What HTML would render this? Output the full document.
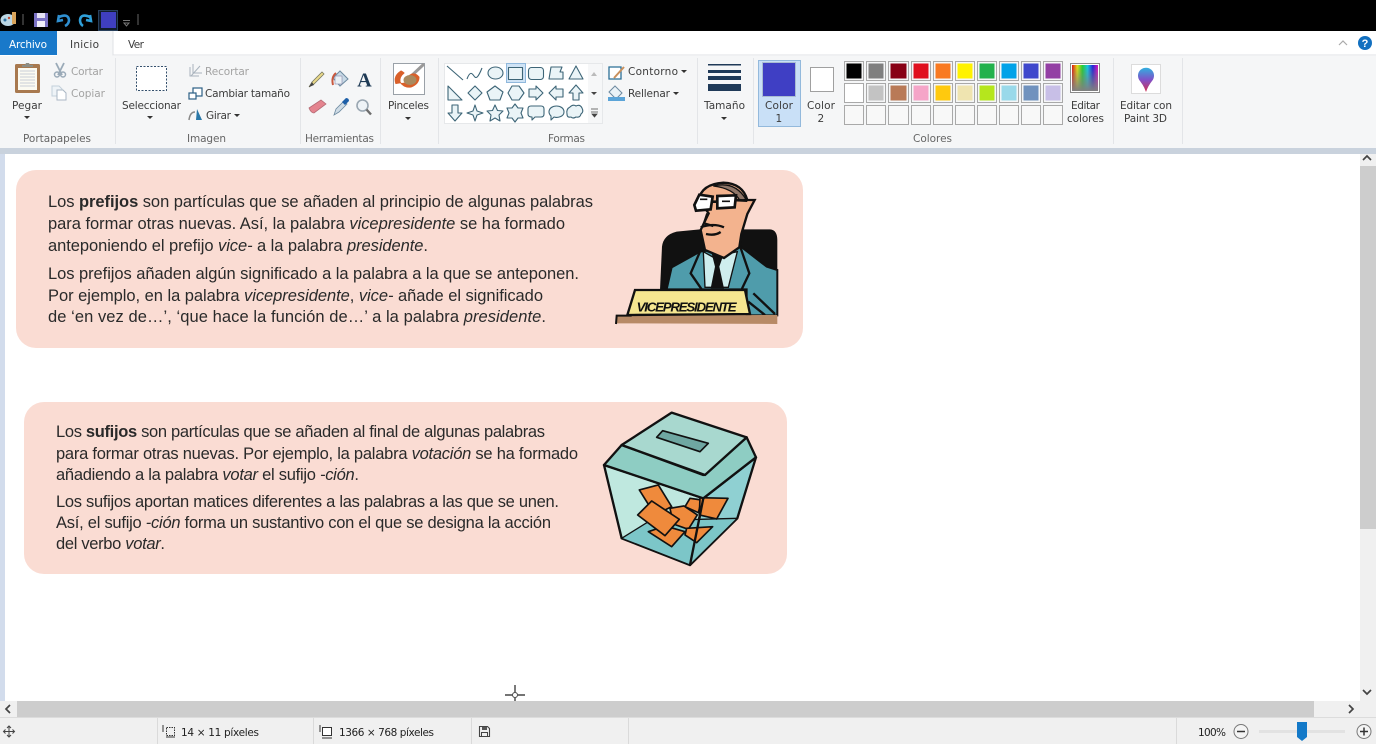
<!DOCTYPE html>
<html lang="es"><head><meta charset="utf-8"><title>Paint</title>
<style>
html,body{margin:0;padding:0;width:1376px;height:744px;overflow:hidden;background:#fff}
svg{display:block;filter:blur(.3px)}
.r{font-family:"DejaVu Sans","Liberation Sans",sans-serif;font-size:10.5px;fill:#3c3c3c}
.d{fill:#a3a3a3}
.g{fill:#666}
.c{font-family:"Liberation Sans",sans-serif;font-size:16.5px;fill:#2a2a2a}
.s{fill:#eaf4f7;stroke:#3d6577;stroke-width:1.1;stroke-linejoin:round}
</style></head><body>
<svg width="1376" height="744" viewBox="0 0 1376 744" xmlns="http://www.w3.org/2000/svg">
<!-- title bar -->
<rect width="1376" height="31" fill="#000"/>
<g>
<ellipse cx="8" cy="20" rx="7.500" ry="6" fill="#bcd7e4"/><circle cx="5" cy="20" r="1.500" fill="#2f6f9f"/><circle cx="9" cy="18" r="1.200" fill="#c0503a"/>
<rect x="12" y="12" width="4" height="12" fill="#d9a45b"/>
<rect x="22" y="14" width="2" height="11" fill="#333"/>
<rect x="34" y="13" width="14" height="14" fill="#7b72c4"/><rect x="37" y="13" width="8" height="5" fill="#e6e3f5"/><rect x="37" y="21" width="8" height="6" fill="#f0eefa"/>
<path d="M59 15 L58 21 L63 20 M59 17 Q68 13 69 20 Q69 24 65 26" fill="none" stroke="#2f8fd0" stroke-width="2.600"/>
<path d="M90 15 L91 21 L86 20 M90 17 Q81 13 80 20 Q80 24 83 26" fill="none" stroke="#2f9fd8" stroke-width="2.600"/>
<rect x="98.500" y="10.500" width="19" height="20" fill="#101c2c" stroke="#28405c"/>
<rect x="101" y="12" width="15" height="16" fill="#3f3fc0"/>
<path d="M123 20.500h7M124 23l2.500 3 2.500-3z" fill="none" stroke="#777"/>
<rect x="137" y="14" width="2" height="11" fill="#333"/>
</g>
<!-- tab row -->
<rect y="31" width="1376" height="24" fill="#fff"/>
<rect y="31" width="57" height="24" fill="#1979ca"/>
<rect x="57" y="31" width="56" height="25" fill="#f5f6f7"/>
<path d="M113 31V55H1376" fill="none" stroke="#dfe1e4"/>
<text class="r" x="9" y="48" textLength="38" style="fill:#fff">Archivo</text>
<text class="r" x="70" y="48" textLength="29">Inicio</text>
<text class="r" x="128" y="48" textLength="16">Ver</text>
<path d="M1339 45l4-4 4 4" fill="none" stroke="#aaa" stroke-width="1.200"/>
<circle cx="1365" cy="43" r="7" fill="#1270c0"/>
<text x="1365" y="47" text-anchor="middle" style="font:bold 11px 'Liberation Sans',sans-serif;fill:#fff">?</text>
<!-- ribbon -->
<rect y="56" width="1376" height="92" fill="#f5f6f7"/>
<rect y="148" width="1376" height="6" fill="#c9d2dd"/>
<path d="M115.500 58V144M300.500 58V144M380.500 58V144M438.500 58V144M697.500 58V144M753.500 58V144M1113.500 58V144M1182.500 58V144" stroke="#e3e5e8"/>
<!-- clipboard -->
<rect x="15" y="64" width="25" height="29" rx="1.500" fill="#a8794f"/>
<rect x="18" y="68" width="19" height="22" fill="#fbfaf1"/>
<path d="M20 71h15M20 74h15M20 77h15M20 80h15M20 83h15M20 86h15" stroke="#c9cfd6"/>
<path d="M22 67v-2h3l1-2h3l1 2h3v2z" fill="#8d8d84"/>
<path d="M24 116h6l-3 3z" fill="#333"/>
<text class="r" x="12" y="109" textLength="30">Pegar</text>
<!-- scissors -->
<path d="M56 63l6 12M64 63l-6 12" stroke="#9aaab8" stroke-width="1.800" fill="none"/>
<circle cx="57" cy="74.500" r="2.500" fill="none" stroke="#9aaab8" stroke-width="1.500"/><circle cx="63" cy="74.500" r="2.500" fill="none" stroke="#9aaab8" stroke-width="1.500"/>
<text class="r d" x="71" y="75" textLength="32">Cortar</text>
<path d="M52 86h7l3 3v7h-10z" fill="#eef3f7" stroke="#c3d0db"/><path d="M57 90h6l3 3v7h-9z" fill="#fff" stroke="#aab7c4"/>
<text class="r d" x="71" y="97" textLength="34">Copiar</text>
<text class="r g" x="23" y="142" textLength="68">Portapapeles</text>
<!-- select -->
<rect x="136.500" y="66.500" width="30" height="24" fill="#fff" stroke="#34506c" stroke-dasharray="2 1.500"/>
<text class="r" x="122" y="109" textLength="59">Seleccionar</text>
<path d="M147 116h6l-3 3z" fill="#333"/>
<path d="M190 67v9h9M193 64v9h9" fill="none" stroke="#a9b3bd"/><path d="M191 76l9-10" stroke="#a9b3bd"/>
<text class="r d" x="205" y="75" textLength="44">Recortar</text>
<rect x="193" y="88" width="9" height="8" fill="#fff" stroke="#2b5f85" stroke-width="1.200"/><rect x="189" y="93" width="7" height="6" fill="#fff" stroke="#2b5f85" stroke-width="1.200"/>
<text class="r" x="205" y="97" textLength="85">Cambiar tamaño</text>
<path d="M189 120q1-8 6-8" fill="none" stroke="#888" stroke-width="1.500"/><path d="M197 109l5 11h-6z" fill="#2a78a8"/>
<text class="r" x="206" y="119" textLength="25">Girar</text>
<path d="M234 114h6l-3 3z" fill="#333"/>
<text class="r g" x="187" y="142" textLength="39">Imagen</text>
<!-- tools -->
<path d="M309 87l3-5 10-10 2 2-10 10z" fill="#ead98a" stroke="#7a7a60" stroke-width=".8"/>
<path d="M309 87l3-5 2 3z" fill="#444"/>
<path d="M340 71l8 8-8 7-7-8z" fill="#c7d9e6" stroke="#6d8aa0"/><rect x="335" y="76" width="7" height="8" fill="#e9f0f5" stroke="#88a" stroke-width=".6"/>
<path d="M333 85q-2-8 3-12" fill="none" stroke="#c9583e" stroke-width="2"/>
<text x="364.500" y="86.500" text-anchor="middle" style="font:bold 20px 'Liberation Serif',serif;fill:#1e3a55">A</text>
<path d="M309 108l12-8 5 4-12 9q-3 0-5-5z" fill="#e4848f" stroke="#b46a74" stroke-width=".8"/>
<path d="M334 115l2-6 8-8 3 3-8 8z" fill="#cfdce6" stroke="#6d8aa0" stroke-width=".8"/><path d="M342 102l4-4q3 0 3 3l-4 4z" fill="#1d5fa8"/>
<circle cx="362.500" cy="105.500" r="5.500" fill="#eef3f7" stroke="#9aa7b2" stroke-width="1.600"/><path d="M366.500 109.500l4.500 5" stroke="#6d6d6d" stroke-width="2.400"/>
<!-- pinceles -->
<rect x="393.500" y="63.500" width="31" height="31" fill="#fff" stroke="#9aa1a8"/>
<path d="M424 64l-16 15" stroke="#999" stroke-width="3"/>
<path d="M396 84q-3-8 5-13 2 1 3 2q-5 4-4 9 4 6 11 5 8-3 8-10-4-5-9-2-5 3-2 7" fill="#d9602a" stroke="#d9602a"/>
<ellipse cx="410" cy="80" rx="6.500" ry="5" fill="#a98a5f"/>
<text class="r" x="388" y="109" textLength="41">Pinceles</text>
<path d="M405 117h6l-3 3z" fill="#333"/>
<text class="r g" x="305" y="142" textLength="69">Herramientas</text>
<!-- shapes gallery -->
<rect x="444.500" y="63.500" width="158" height="60" fill="#fff" stroke="#e6e8ea"/>
<rect x="506.500" y="63.500" width="19" height="19" fill="#cfe3f5" stroke="#90b8dc"/>
<rect x="588" y="64" width="14" height="59" fill="#f6f7f8"/>
<path d="M447 66l16 14" class="s" fill="none"/>
<path d="M467 79c3-8 5-6 7-3s4 2 8-8" fill="none" stroke="#3d6577" stroke-width="1.100"/>
<ellipse cx="495.500" cy="73" rx="7.500" ry="6" class="s"/>
<rect x="508.500" y="67.500" width="14" height="12" class="s"/>
<rect x="528.500" y="67.500" width="15" height="12" rx="3" class="s"/>
<path d="M551 67h11l-2 5h3v7h-14z" class="s"/>
<path d="M576 66l7 13h-14z" class="s"/>
<path d="M448 86l14 14h-14z" class="s"/>
<path d="M475 86l7 7-7 7-7-7z" class="s"/>
<path d="M495 86l8 6-3 8h-10l-3-8z" class="s"/>
<path d="M512 86h7l5 7-5 7h-7l-4-7z" class="s"/>
<path d="M529 89h7v-3l7 7-7 7v-3h-7z" class="s"/>
<path d="M563 89h-7v-3l-7 7 7 7v-3h7z" class="s"/>
<path d="M576 85l7 8h-4v7h-6v-7h-4z" class="s"/>
<path d="M452 105h6v8h4l-7 8-7-8h4z" class="s"/>
<path d="M475 105l2 6 6 2-6 2-2 6-2-6-6-2 6-2z" class="s"/>
<path d="M495 105l2.500 5.500 5.500.5-4 4 1 6-5-3-5 3 1-6-4-4 5.500-.5z" class="s"/>
<path d="M515 104l3 4h5l-2 5 2 5h-5l-3 4-3-4h-5l2-5-2-5h5z" class="s"/>
<path d="M531 106h10q3 0 3 3v5q0 3-3 3h-6l-3 3v-3q-4 0-4-3v-5q0-3 3-3z" class="s"/>
<path d="M549 112c0-8 15-8 15 0c0 5-7 6-10 5l-3 3v-4q-2-2-2-4z" class="s"/>
<path d="M570 107q3-3 6-1 4-2 6 2 2 4-1 6-1 4-5 3-3 2-5 0-4 1-4-3-1-5 3-7z" class="s"/>
<path d="M591 76l3-4 3 4z" fill="#bbb"/><path d="M591 92h6l-3 3z" fill="#444"/>
<path d="M591 109h7M591 112h7M592 114h5l-2.500 3z" fill="#444" stroke="#444" stroke-width=".8"/>
<path d="M609 67h12v12h-12z" fill="#fff" stroke="#2b6f96" stroke-width="1.300"/><path d="M614 78l10-11" stroke="#c9905c" stroke-width="2"/>
<text class="r" x="628" y="75" textLength="50">Contorno</text>
<path d="M681 70h6l-3 3z" fill="#333"/>
<path d="M615 86l7 7-6 6-7-7z" fill="#eaf2f7" stroke="#6d8aa0"/><rect x="608" y="97" width="17" height="4" fill="#5ba4d8"/>
<text class="r" x="628" y="97" textLength="42">Rellenar</text>
<path d="M673 92h6l-3 3z" fill="#333"/>
<text class="r g" x="548" y="142" textLength="37">Formas</text>
<!-- size -->
<rect x="708" y="64" width="33" height="1.500" fill="#1f3a58"/><rect x="708" y="70" width="33" height="3" fill="#1f3a58"/><rect x="708" y="76" width="33" height="4" fill="#1f3a58"/><rect x="708" y="84" width="33" height="7" fill="#1f3a58"/>
<text class="r" x="704" y="109" textLength="41">Tamaño</text>
<path d="M721 117h6l-3 3z" fill="#333"/>
<!-- color 1/2 -->
<rect x="758.500" y="60.500" width="42" height="66" fill="#c9e0f7" stroke="#93b9dc"/>
<rect x="762.500" y="62.500" width="33" height="34" fill="#3f3fc4" stroke="#a9bdd2"/>
<text class="r" x="765" y="109" textLength="28">Color</text>
<text class="r" x="775.500" y="122">1</text>
<rect x="810.500" y="67.500" width="23" height="24" fill="#fff" stroke="#a0a0a0"/>
<text class="r" x="807" y="109" textLength="28">Color</text>
<text class="r" x="817.500" y="122">2</text>
<!-- palette -->
<g stroke="#a9a9a9" fill="none">
<g>
<rect x="844.500" y="61.500" width="19" height="19" fill="#f5f5f5"/><rect x="846.500" y="63.500" width="15" height="15" fill="#000" stroke="none"/>
<rect x="866.500" y="61.500" width="19" height="19"/><rect x="868.500" y="63.500" width="15" height="15" fill="#7f7f7f" stroke="none"/>
<rect x="888.500" y="61.500" width="20" height="19"/><rect x="890.500" y="63.500" width="16" height="15" fill="#880015" stroke="none"/>
<rect x="911.500" y="61.500" width="19" height="19"/><rect x="913.500" y="63.500" width="15" height="15" fill="#e0101f" stroke="none"/>
<rect x="933.500" y="61.500" width="19" height="19"/><rect x="935.500" y="63.500" width="15" height="15" fill="#f97a22" stroke="none"/>
<rect x="955.500" y="61.500" width="19" height="19"/><rect x="957.500" y="63.500" width="15" height="15" fill="#fff200" stroke="none"/>
<rect x="977.500" y="61.500" width="19" height="19"/><rect x="979.500" y="63.500" width="15" height="15" fill="#22b14c" stroke="none"/>
<rect x="999.500" y="61.500" width="19" height="19"/><rect x="1001.500" y="63.500" width="15" height="15" fill="#00a2e8" stroke="none"/>
<rect x="1021.500" y="61.500" width="19" height="19"/><rect x="1023.500" y="63.500" width="15" height="15" fill="#3f48cc" stroke="none"/>
<rect x="1043.500" y="61.500" width="19" height="19"/><rect x="1045.500" y="63.500" width="15" height="15" fill="#933fa4" stroke="none"/>
</g>
<g>
<rect x="844.500" y="83.500" width="19" height="19" fill="#fff"/>
<rect x="866.500" y="83.500" width="19" height="19"/><rect x="868.500" y="85.500" width="15" height="15" fill="#c3c3c3" stroke="none"/>
<rect x="888.500" y="83.500" width="20" height="19"/><rect x="890.500" y="85.500" width="16" height="15" fill="#b97a57" stroke="none"/>
<rect x="911.500" y="83.500" width="19" height="19"/><rect x="913.500" y="85.500" width="15" height="15" fill="#f5a5c8" stroke="none"/>
<rect x="933.500" y="83.500" width="19" height="19"/><rect x="935.500" y="85.500" width="15" height="15" fill="#ffc90e" stroke="none"/>
<rect x="955.500" y="83.500" width="19" height="19"/><rect x="957.500" y="85.500" width="15" height="15" fill="#efe4b0" stroke="none"/>
<rect x="977.500" y="83.500" width="19" height="19"/><rect x="979.500" y="85.500" width="15" height="15" fill="#b5e61d" stroke="none"/>
<rect x="999.500" y="83.500" width="19" height="19"/><rect x="1001.500" y="85.500" width="15" height="15" fill="#99d9ea" stroke="none"/>
<rect x="1021.500" y="83.500" width="19" height="19"/><rect x="1023.500" y="85.500" width="15" height="15" fill="#7092be" stroke="none"/>
<rect x="1043.500" y="83.500" width="19" height="19"/><rect x="1045.500" y="85.500" width="15" height="15" fill="#c8bfe7" stroke="none"/>
</g>
<g fill="#f8f8f8">
<rect x="844.500" y="105.500" width="19" height="19"/><rect x="866.500" y="105.500" width="19" height="19"/><rect x="888.500" y="105.500" width="20" height="19"/><rect x="911.500" y="105.500" width="19" height="19"/><rect x="933.500" y="105.500" width="19" height="19"/><rect x="955.500" y="105.500" width="19" height="19"/><rect x="977.500" y="105.500" width="19" height="19"/><rect x="999.500" y="105.500" width="19" height="19"/><rect x="1021.500" y="105.500" width="19" height="19"/><rect x="1043.500" y="105.500" width="19" height="19"/>
</g>
</g>
<defs>
<linearGradient id="h" x1="0" x2="1" y1="0" y2="0"><stop offset="0" stop-color="#e01010"/><stop offset=".2" stop-color="#e8e010"/><stop offset=".4" stop-color="#20d030"/><stop offset=".6" stop-color="#10c8e8"/><stop offset=".8" stop-color="#2020d8"/><stop offset="1" stop-color="#e010c0"/></linearGradient>
<linearGradient id="v" x1="0" x2="0" y1="0" y2="1"><stop offset="0" stop-color="#808080" stop-opacity="0"/><stop offset="1" stop-color="#808080"/></linearGradient>
<linearGradient id="b" x1="0" x2="0" y1="0" y2="1"><stop offset="0" stop-color="#30b0e0"/><stop offset=".5" stop-color="#8050c8"/><stop offset="1" stop-color="#d03050"/></linearGradient>
</defs>
<rect x="1070.500" y="63.500" width="29" height="29" fill="#fff" stroke="#8a8a8a"/>
<rect x="1072" y="65" width="26" height="26" fill="url(#h)"/><rect x="1072" y="65" width="26" height="26" fill="url(#v)"/>
<text class="r" x="1071" y="109" textLength="29">Editar</text>
<text class="r" x="1067" y="122" textLength="37">colores</text>
<rect x="1131.500" y="64.500" width="29" height="29" fill="#fff" stroke="#dcdcdc"/>
<path d="M1146 92q-2-6-6-11a8 8 0 1 1 12 0q-4 5-6 11z" fill="url(#b)"/>
<text class="r" x="1120" y="109" textLength="52">Editar con</text>
<text class="r" x="1124" y="122" textLength="43">Paint 3D</text>
<text class="r g" x="913" y="142" textLength="39">Colores</text>
<!-- canvas -->
<rect x="0" y="154" width="5" height="547" fill="#d2dcec"/>
<rect x="5" y="154" width="1355" height="547" fill="#fff"/>
<!-- box 1 -->
<rect x="16" y="170" width="787" height="178" rx="20" fill="#fadcd3"/>
<text class="c" x="48" y="207" textLength="545">Los <tspan font-weight="bold">prefijos</tspan> son partículas que se añaden al principio de algunas palabras</text>
<text class="c" x="48" y="229" textLength="517">para formar otras nuevas. Así, la palabra <tspan font-style="italic">vicepresidente</tspan> se ha formado</text>
<text class="c" x="48" y="251" textLength="380">anteponiendo el prefijo <tspan font-style="italic">vice-</tspan> a la palabra <tspan font-style="italic">presidente</tspan>.</text>
<text class="c" x="48" y="279" textLength="531">Los prefijos añaden algún significado a la palabra a la que se anteponen.</text>
<text class="c" x="48" y="301" textLength="495">Por ejemplo, en la palabra <tspan font-style="italic">vicepresidente</tspan>, <tspan font-style="italic">vice-</tspan> añade el significado</text>
<text class="c" x="48" y="322" textLength="498">de ‘en vez de…’, ‘que hace la función de…’ a la palabra <tspan font-style="italic">presidente</tspan>.</text>
<!-- man -->
<g transform="translate(600,170) scale(.3333)">
<path d="M180 360L186 230Q190 195 230 185L300 178H510Q532 180 532 210V435L180 360z" fill="#111"/>
<path d="M200 358L215 292L300 245L420 228L500 290L532 300V436H440V358z" fill="#4f9cab" stroke="#111" stroke-width="6"/>
<path d="M310 245L340 262L412 245L385 352H315z" fill="#cfeeee" stroke="#111" stroke-width="4"/>
<path d="M335 250L372 250L358 290L372 355H332L345 290z" fill="#111"/>
<path d="M300 245L272 310L305 358M420 228L448 310L425 358M460 370L525 432M445 395L495 435" fill="none" stroke="#111" stroke-width="7"/>
<path d="M296 90Q305 42 370 38Q428 40 442 90L464 90L442 132L424 192L418 232L372 264L315 240L302 180L326 130Z" fill="#f3b38e" stroke="#111" stroke-width="7"/>
<path d="M340 48Q405 32 438 88L420 92Q400 55 340 48z" fill="#8f7668" stroke="#111" stroke-width="4"/>
<path d="M283 105L298 74L338 80L332 118L288 122zM352 78L408 76L404 112L352 115z" fill="#fff" stroke="#111" stroke-width="8"/>
<path d="M335 95H355M405 90L442 92" stroke="#111" stroke-width="8"/>
<path d="M300 88h22M366 94h24" stroke="#111" stroke-width="5"/>
<path d="M322 130L312 160L340 168M302 172Q340 158 372 172M318 192Q345 198 362 186" fill="none" stroke="#111" stroke-width="7"/>
<path d="M48 460L50 437L532 435V462z" fill="#b78a66"/>
<path d="M48 462L50 437H95" fill="none" stroke="#111" stroke-width="6"/>
<path d="M82 435L105 360L435 360L450 432z" fill="#f5e690" stroke="#111" stroke-width="7"/>
<text x="110" y="424" textLength="300" style="font:italic bold 40px 'Liberation Sans',sans-serif;fill:#111">VICEPRESIDENTE</text>
</g>
<!-- box 2 -->
<rect x="24" y="402" width="763" height="172" rx="20" fill="#fadcd3"/>
<text class="c" x="56" y="437" textLength="489">Los <tspan font-weight="bold">sufijos</tspan> son partículas que se añaden al final de algunas palabras</text>
<text class="c" x="56" y="459" textLength="522">para formar otras nuevas. Por ejemplo, la palabra <tspan font-style="italic">votación</tspan> se ha formado</text>
<text class="c" x="56" y="480" textLength="303">añadiendo a la palabra <tspan font-style="italic">votar</tspan> el sufijo <tspan font-style="italic">-ción</tspan>.</text>
<text class="c" x="56" y="507" textLength="503">Los sufijos aportan matices diferentes a las palabras a las que se unen.</text>
<text class="c" x="56" y="528" textLength="495">Así, el sufijo <tspan font-style="italic">-ción</tspan> forma un sustantivo con el que se designa la acción</text>
<text class="c" x="56" y="549" textLength="109">del verbo <tspan font-style="italic">votar</tspan>.</text>
<!-- ballot box -->
<g transform="translate(590,400) scale(.3333)" stroke="#111" stroke-width="7" stroke-linejoin="round">
<path d="M42 195L340 295L300 495L95 415z" fill="#bfe8df"/>
<path d="M340 295L498 172L442 355L300 495z" fill="#8fd0d2"/>
<path d="M95 415L180 362L442 355L300 495z" fill="#7cc6c8" stroke-width="4"/>
<path d="M148 270L205 255L245 320L195 345z" fill="#ef8a3c" stroke-width="5"/>
<path d="M285 320L300 295L335 300L325 338z" fill="#ef8a3c" stroke-width="5"/>
<path d="M330 293L414 295L380 357L328 345z" fill="#ef8a3c" stroke-width="5"/>
<path d="M240 325L282 318L322 345L295 388L250 372z" fill="#ef8a3c" stroke-width="5"/>
<path d="M290 385L368 380L320 428L285 405z" fill="#ef8a3c" stroke-width="5"/>
<path d="M175 395L225 378L285 395L245 440z" fill="#ef8a3c" stroke-width="5"/>
<path d="M143 345L185 303L268 358L225 407z" fill="#ef8a3c" stroke-width="5"/>
<path d="M42 195L95 135L340 225L470 112L498 172L340 295z" fill="#8ecdc3"/>
<path d="M245 38L470 112L345 225L95 135z" fill="#a8d8cf"/>
<path d="M218 92L355 130L330 155L200 112z" fill="#6fa7a2" stroke-width="5"/>
<path d="M340 295L300 495" fill="none"/>
</g>
<!-- cursor -->
<path d="M515 685V692M515 698V705M505 695H512M518 695H525" stroke="#222" stroke-width="1.200"/><circle cx="515" cy="695" r="2.500" fill="none" stroke="#444"/>
<!-- scrollbars -->
<rect x="1360" y="154" width="16" height="547" fill="#f0f0f0"/>
<rect x="1360" y="166" width="16" height="363" fill="#cdcdcd"/>
<path d="M1363 160l4-4 4 4M1363 690l4 4 4-4" fill="none" stroke="#444" stroke-width="1.700"/>
<rect y="701" width="1376" height="16" fill="#f0f0f0"/>
<rect x="17" y="701" width="1297" height="16" fill="#cdcdcd"/>
<path d="M10 705l-4 4 4 4M1349 705l4 4-4 4" fill="none" stroke="#444" stroke-width="1.700"/>
<!-- status bar -->
<rect y="717" width="1376" height="27" fill="#f0f0f0"/>
<path d="M0 717.500H1376" stroke="#dcdcdc"/>
<path d="M157.500 718V744M313.500 718V744M471.500 718V744M628.500 718V744M1176.500 718V744" stroke="#dadada"/>
<path d="M9 726v11M3.500 731.500h11M7 728l2-2 2 2M7 735l2 2 2-2M5.500 729.500l-2 2 2 2M12.500 729.500l2 2-2 2" fill="none" stroke="#444"/>
<rect x="166.500" y="727.500" width="8" height="8" fill="none" stroke="#333" stroke-dasharray="1.500 1"/><path d="M163 725v7M166 737h9" stroke="#333"/>
<text class="r" x="181" y="736" textLength="78" style="fill:#222">14 × 11 píxeles</text>
<rect x="322.500" y="727.500" width="9" height="8" fill="#fff" stroke="#333"/><path d="M320 725v7M322 738h10" stroke="#333"/>
<text class="r" x="339" y="736" textLength="95" style="fill:#222">1366 × 768 píxeles</text>
<path d="M479.500 726.500h8l2 2v8h-10z" fill="none" stroke="#444" stroke-width="1.100"/><rect x="482" y="727" width="5" height="3" fill="#555"/><rect x="481.500" y="732.500" width="6" height="4" fill="none" stroke="#444"/>
<text class="r" x="1198" y="736" textLength="28" style="fill:#222">100%</text>
<circle cx="1241" cy="731.500" r="7" fill="#f4f4f4" stroke="#777"/><path d="M1237 731.500h8" stroke="#333" stroke-width="1.500"/>
<rect x="1259" y="730" width="86" height="3" fill="#e2e2e2"/>
<path d="M1297 722h10v15l-5 4-5-4z" fill="#1379c8"/>
<circle cx="1364" cy="731.500" r="7" fill="#f4f4f4" stroke="#777"/><path d="M1360 731.500h8M1364 727.500v8" stroke="#333" stroke-width="1.500"/>
</svg>
</body></html>
